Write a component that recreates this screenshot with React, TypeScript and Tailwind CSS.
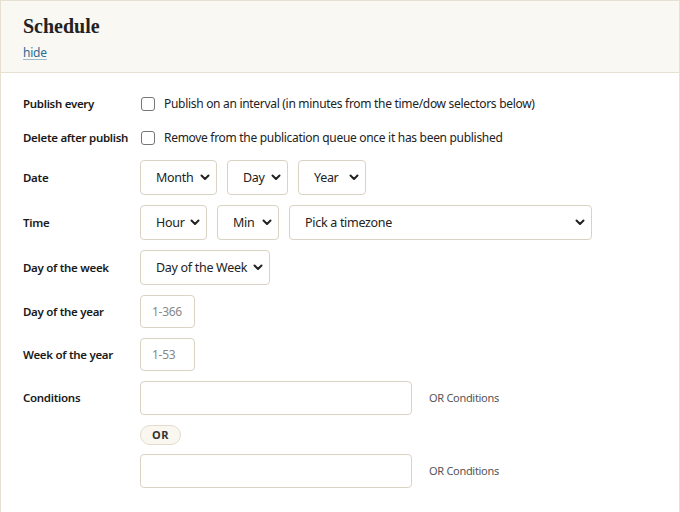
import React from "react";

const font = { fontFamily: '"Noto Sans", "Open Sans", sans-serif' };

function Chevron() {
  return (
    <svg width="10" height="7" viewBox="0 0 10 7" className="shrink-0">
      <path d="M1.5 1.5 L5 5 L8.5 1.5" fill="none" stroke="#222" strokeWidth="2" strokeLinecap="round" strokeLinejoin="round" />
    </svg>
  );
}

function Select({ label, w }: { label: string; w: string }) {
  return (
    <div
      className={`${w} h-[35px] border border-[#d9d3c4] rounded-[4px] bg-white flex items-center justify-between pl-[15px] pr-[6px] text-[12.5px] tracking-[-0.3px] text-[#222] whitespace-nowrap`}
    >
      <span className="pt-[2px]">{label}</span>
      <Chevron />
    </div>
  );
}

function Checkbox() {
  return <div className="w-[14px] h-[14px] border border-[#767676] rounded-[3px] bg-white shrink-0" />;
}

const labelCls = "w-[117px] shrink-0 text-[11.5px] font-semibold tracking-[-0.3px] text-[#1a1a1a] whitespace-nowrap";

function Row({ label, children, h = "h-[35px]" }: { label: string; children: React.ReactNode; h?: string }) {
  return (
    <div className={`flex items-center ${h}`}>
      <div className={labelCls}>{label}</div>
      <div className="flex items-center gap-[10px]">{children}</div>
    </div>
  );
}

export default function App() {
  return (
    <div className="w-[680px] h-[512px] bg-white overflow-hidden" style={font}>
      <div className="border border-[#e6e0d3] border-b-0 h-[520px]">
        <div className="bg-[#faf8f3] border-b border-[#e6e0d3] h-[72px] px-[22px] pt-[12px]">
          <h2
            className="text-[20px] font-bold text-[#222] leading-[26px]"
            style={{ fontFamily: '"Liberation Serif", Georgia, serif' }}
          >
            Schedule
          </h2>
          <a className="block mt-[6px] text-[12px] tracking-[-0.2px] text-[#2a6a94] underline decoration-[#9bbbd0] underline-offset-2 leading-[16px]">
            hide
          </a>
        </div>
        <div className="px-[22px] pt-[19px] flex flex-col gap-[10px]">
          <Row label="Publish every" h="h-[24px]">
            <div className="flex items-center gap-[9px] pl-[1px]">
              <Checkbox />
              <span className="text-[12px] tracking-[-0.3px] text-[#222]">
                Publish on an interval (in minutes from the time/dow selectors below)
              </span>
            </div>
          </Row>
          <Row label="Delete after publish" h="h-[24px]">
            <div className="flex items-center gap-[9px] pl-[1px]">
              <Checkbox />
              <span className="text-[12px] tracking-[-0.3px] text-[#222]">
                Remove from the publication queue once it has been published
              </span>
            </div>
          </Row>
          <Row label="Date">
            <Select label="Month" w="w-[77px]" />
            <Select label="Day" w="w-[61px]" />
            <Select label="Year" w="w-[68px]" />
          </Row>
          <Row label="Time">
            <Select label="Hour" w="w-[67px]" />
            <Select label="Min" w="w-[62px]" />
            <Select label="Pick a timezone" w="w-[303px]" />
          </Row>
          <Row label="Day of the week">
            <Select label="Day of the Week" w="w-[130px]" />
          </Row>
          <Row label="Day of the year" h="h-[33px]">
            <div className="w-[55px] h-[33px] border border-[#d9d3c4] rounded-[4px] flex items-center pl-[11px] text-[12px] tracking-[-0.3px] text-[#888]">
              1-366
            </div>
          </Row>
          <Row label="Week of the year" h="h-[33px]">
            <div className="w-[55px] h-[33px] border border-[#d9d3c4] rounded-[4px] flex items-center pl-[11px] text-[12px] tracking-[-0.3px] text-[#888]">
              1-53
            </div>
          </Row>
          <div className="flex">
            <div className={`${labelCls} h-[34px] flex items-center`}>Conditions</div>
            <div className="flex flex-col">
              <div className="flex items-center gap-[17px]">
                <div className="w-[272px] h-[34px] border border-[#d9d3c4] rounded-[4px] bg-white" />
                <span className="text-[11px] tracking-[-0.3px] text-[#555]">OR Conditions</span>
              </div>
              <div className="mt-[10px] w-[41px] h-[20px] rounded-full border border-[#e3dccb] bg-[#faf7f0] flex items-center justify-center text-[11px] font-bold text-[#333] tracking-[0.5px]">
                OR
              </div>
              <div className="mt-[9px] flex items-center gap-[17px]">
                <div className="w-[272px] h-[34px] border border-[#d9d3c4] rounded-[4px] bg-white" />
                <span className="text-[11px] tracking-[-0.3px] text-[#555]">OR Conditions</span>
              </div>
            </div>
          </div>
        </div>
      </div>
    </div>
  );
}
